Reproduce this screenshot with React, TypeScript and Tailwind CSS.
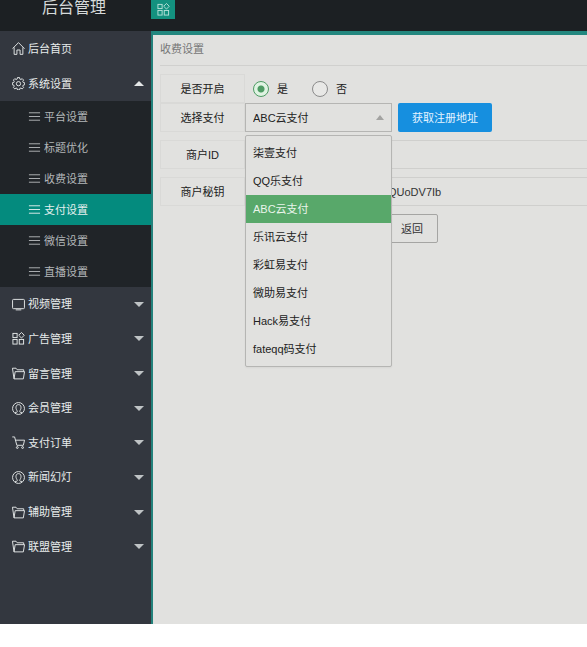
import React, { useState } from "react";

type IconName = "home" | "gear" | "screen" | "blocks" | "folder" | "user" | "cart" | "lines";

const icons: Record<IconName, React.ReactNode> = {
    home: (
        <>
            <path d="M.5 7.2 7 .7l6.5 6.5" />
            <path d="M2.3 5.8v7.5h3V8.6h3.4v4.7h3V5.8" />
        </>
    ),
    gear: (
        <>
            <path d="M5.9.6h2.2l.3 1.6 1.2.5 1.4-.9 1.5 1.5-.9 1.4.5 1.2 1.5.3v2.2l-1.5.3-.5 1.2.9 1.4-1.5 1.5-1.4-.9-1.2.5-.3 1.5H5.9l-.3-1.5-1.2-.5-1.4.9-1.5-1.5.9-1.4-.5-1.2L.4 8.4V6.2l1.5-.3.5-1.2-.9-1.4L3 1.8l1.4.9 1.2-.5z" />
            <circle cx="7" cy="7.2" r="2.3" />
        </>
    ),
    screen: (
        <>
            <rect x=".6" y="1.5" width="12.8" height="10" rx="1" />
            <path d="M4 12.8h6" />
        </>
    ),
    blocks: (
        <>
            <rect x="1" y="1.5" width="4.5" height="4.5" />
            <rect x="1" y="8" width="4.5" height="5" />
            <rect x="7.8" y="8" width="4.7" height="5" />
            <path d="m10.2.5 3 3-3 3-3-3z" />
        </>
    ),
    folder: (
        <>
            <path d="M2.2 12.8.5 1.3h3.8L5.600 3h7v2" />
            <path d="M2.2 12.8 3.4 5h10.1l-1.3 7.8z" />
        </>
    ),
    user: (
        <>
            <circle cx="7" cy="7" r="6.4" />
            <path d="M3.2 11.2h1.5c.9 0 1.2-.9.8-1.7-.5-.9-1.2-1.9-1.2-3.7 0-1.900 1.200-3 2.700-3s2.700 1.100 2.700 3c0 1.800-.7 2.800-1.200 3.700-.4.8-.1 1.700.8 1.700h1.500" />
        </>
    ),
    cart: (
        <>
            <path d="M.3 1h2.5l2.4 9h7M3.7 4.5h9.8L12.2 10" />
            <circle cx="5.7" cy="12.4" r="1" />
            <circle cx="11.4" cy="12.4" r="1" />
        </>
    ),
    lines: <path d="M1 3h12M1 7h12M1 11h12" />,
};

function Icon({ name, className }: { name: IconName; className?: string }) {
    return (
        <svg
            viewBox="0 0 14 14"
            className={className}
            fill="none"
            stroke="currentColor"
            strokeWidth="1"
            aria-hidden="true"
        >
            {icons[name]}
        </svg>
    );
}

const subItems = ["平台设置", "标题优化", "收费设置", "支付设置", "微信设置", "直播设置"];

const menuItems: { label: string; icon: IconName }[] = [
    { label: "视频管理", icon: "screen" },
    { label: "广告管理", icon: "blocks" },
    { label: "留言管理", icon: "folder" },
    { label: "会员管理", icon: "user" },
    { label: "支付订单", icon: "cart" },
    { label: "新闻幻灯", icon: "user" },
    { label: "辅助管理", icon: "folder" },
    { label: "联盟管理", icon: "folder" },
];

const payOptions = [
    "柒壹支付",
    "QQ乐支付",
    "ABC云支付",
    "乐讯云支付",
    "彩虹易支付",
    "微助易支付",
    "Hack易支付",
    "fateqq码支付",
];

const labelClass =
    "flex h-[29px] w-[85px] shrink-0 items-center justify-center border border-[#d9d9d7] text-[#222]";

function MenuLink({ label, icon, arrow }: { label: string; icon: IconName; arrow?: "up" | "down" }) {
    return (
        <a href="#" className="flex items-center pr-[7px] pl-3 text-[#e8ecec]">
            <Icon name={icon} className="mr-[3px] size-[13px]" />
            <span className="flex-1">{label}</span>
            {arrow === "up" && (
                <span className="border-x-5 border-b-5 border-x-transparent border-b-[#e4e6e6]" />
            )}
            {arrow === "down" && (
                <span className="border-x-5 border-t-5 border-x-transparent border-t-[#bfc3c5]" />
            )}
        </a>
    );
}

function Sidebar() {
    return (
        <nav className="w-[153px] shrink-0 border-r-2 border-[#23817b] bg-[#33373f]">
            <div className="grid h-[70px] auto-rows-fr">
                <MenuLink label="后台首页" icon="home" />
                <MenuLink label="系统设置" icon="gear" arrow="up" />
            </div>
            <ul className="bg-[#202428]">
                {subItems.map((label) => (
                    <li key={label}>
                        <a
                            href="#"
                            className={
                                label === "支付设置"
                                    ? "flex h-[31px] items-center bg-[#048b7e] pl-7 text-[#e4f0ee]"
                                    : "flex h-[31px] items-center pl-7 text-[#b3b7b9]"
                            }
                        >
                            <Icon name="lines" className="mr-[3px] size-[13px]" />
                            {label}
                        </a>
                    </li>
                ))}
            </ul>
            <div className="grid h-[277px] auto-rows-fr">
                {menuItems.map((item) => (
                    <MenuLink key={item.label} label={item.label} icon={item.icon} arrow="down" />
                ))}
            </div>
        </nav>
    );
}

function RadioOption({ label, checked, onChange }: { label: string; checked: boolean; onChange: () => void }) {
    return (
        <label className="flex items-center gap-2 text-[#222]">
            <input
                type="radio"
                name="enabled"
                checked={checked}
                onChange={onChange}
                className="size-4 appearance-none rounded-full border border-[#8b8b8b] bg-[#e8e8e6] checked:border-[#4e9c64] checked:bg-[radial-gradient(circle,#4e9c64_3px,#dff3e2_4px)]"
            />
            {label}
        </label>
    );
}

function PaySelect() {
    const [value, setValue] = useState("ABC云支付");

    return (
        <div className="relative w-[147px] shrink-0">
            <select
                id="pay"
                value={value}
                onChange={(e) => setValue(e.target.value)}
                className="block h-[29px] w-full appearance-none border border-[#b5b5b3] pl-[7px] text-[#222] outline-none"
            >
                {payOptions.map((option) => (
                    <option key={option}>{option}</option>
                ))}
            </select>
            <span className="pointer-events-none absolute top-3 right-2 border-x-4 border-b-5 border-x-transparent border-b-[#a3a3a1]" />

            {/* Open option list */}
            <ul className="absolute top-8 left-0 z-10 w-full rounded-xs border border-[#b5b5b3] bg-[#e1e1df] py-[3px] shadow-xs">
                {payOptions.map((option) => (
                    <li key={option}>
                        <button
                            type="button"
                            onClick={() => setValue(option)}
                            className={
                                option === value
                                    ? "block h-7 w-full bg-[#58a86a] pl-[7px] text-left text-[#eaf5ec]"
                                    : "block h-7 w-full pl-[7px] text-left text-[#222]"
                            }
                        >
                            {option}
                        </button>
                    </li>
                ))}
            </ul>
        </div>
    );
}

export default function App() {
    const [enabled, setEnabled] = useState(true);

    return (
        <div className="min-h-screen bg-white pb-[23px] font-['Liberation_Sans','Noto_Sans_CJK_SC',sans-serif] text-[11px] leading-4">
            {/* Top bar */}
            <header className="flex h-[31px] items-start overflow-hidden bg-[#1c2023]">
                <h1 className="w-[151px] shrink-0 pl-[42px] text-base leading-4 text-[#d6dada]">后台管理</h1>
                <button
                    type="button"
                    aria-label="菜单"
                    className="flex h-[19px] w-6 items-center justify-center bg-[#13917f] text-[#b9e2da]"
                >
                    <Icon name="blocks" className="size-[13px]" />
                </button>
            </header>

            <div className="flex min-h-[593px]">
                <Sidebar />

                <main className="min-w-0 flex-1 overflow-hidden border-t-4 border-[#23877f] bg-[#e1e1df] pl-[7px]">
                    <h2 className="h-[31px] border-b border-[#d0d0ce] text-[#777] leading-[29px]">收费设置</h2>

                    <form className="pt-2">
                        <div className="flex">
                            <span className={labelClass}>是否开启</span>
                            <div className="flex items-center gap-6 pl-2">
                                <RadioOption label="是" checked={enabled} onChange={() => setEnabled(true)} />
                                <RadioOption label="否" checked={!enabled} onChange={() => setEnabled(false)} />
                            </div>
                        </div>

                        <div className="mb-2 flex">
                            <label htmlFor="pay" className={labelClass}>选择支付</label>
                            <PaySelect />
                            <button type="button" className="ml-1.5 h-[29px] rounded-xs bg-[#168fdf] px-3.5 text-[#e6f4ff]">
                                获取注册地址
                            </button>
                        </div>

                        <div className="mb-2 flex">
                            <label htmlFor="merchant-id" className={labelClass}>商户ID</label>
                            <input
                                id="merchant-id"
                                className="h-[29px] min-w-0 flex-1 border border-r-0 border-[#cfcfcd] pl-[7px] outline-none"
                            />
                        </div>

                        <div className="mb-2 flex">
                            <label htmlFor="merchant-key" className={labelClass}>商户秘钥</label>
                            <input
                                id="merchant-key"
                                defaultValue="QUoDV7Ib"
                                className="h-[29px] min-w-0 flex-1 border border-r-0 border-[#cfcfcd] pl-[142px] text-[#333] outline-none"
                            />
                        </div>

                        <div className="flex pl-[226px]">
                            <button type="reset" className="h-[29px] w-[52px] rounded-xs border border-[#a5a5a3] text-[#333]">
                                返回
                            </button>
                        </div>
                    </form>
                </main>
            </div>
        </div>
    );
}
